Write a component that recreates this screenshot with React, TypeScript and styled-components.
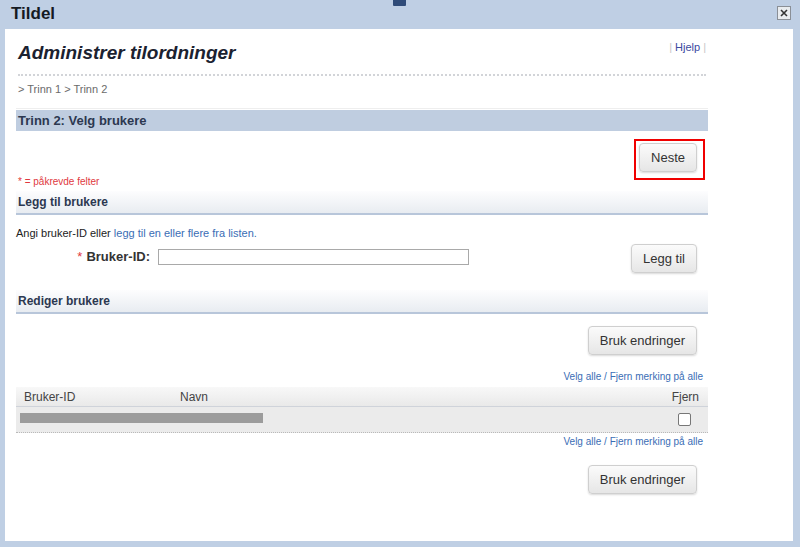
import React from "react";
import styled, { createGlobalStyle } from "styled-components";

const Global = createGlobalStyle`
  html, body { margin: 0; padding: 0; }
  body { font-family: "Liberation Sans", Arial, sans-serif; }
  * { box-sizing: border-box; }
`;

const Page = styled.div`
  width: 800px;
  height: 547px;
  background: #bfcfe4;
  display: flex;
  flex-direction: column;
  overflow: hidden;
`;

const TitleBar = styled.div`
  position: relative;
  height: 29px;
  flex: none;
  display: flex;
  align-items: center;
  justify-content: space-between;
  padding: 0 9px 2px 11px;
`;

const Title = styled.div`
  font-size: 17px;
  font-weight: bold;
  color: #151a22;
`;

const Grip = styled.div`
  position: absolute;
  left: 393px;
  top: 0;
  width: 13px;
  height: 6px;
  background: #2f4b78;
  border-radius: 0 0 1px 1px;
`;

const CloseBtn = styled.div`
  width: 14px;
  height: 14px;
  border: 1px solid #8a8f96;
  background: #e9ecef;
  display: flex;
  align-items: center;
  justify-content: center;
  margin-bottom: 2px;
`;

const Panel = styled.div`
  flex: 1;
  margin: 0 7px 6px 5px;
  background: #fff;
  padding: 0 0 0 11px;
`;

const Content = styled.div`
  width: 692px;
  display: flex;
  flex-direction: column;
`;

const HeaderRow = styled.div`
  height: 47px;
  margin: 0 2px;
  display: flex;
  justify-content: space-between;
  align-items: center;
  border-bottom: 2px dotted #d2d4d8;
`;

const PageTitle = styled.h1`
  margin: 2px 0 0;
  font-size: 19px;
  font-weight: bold;
  font-style: italic;
  color: #1b2230;
`;

const HelpLinks = styled.div`
  font-size: 11px;
  color: #c8c8c8;
  align-self: flex-start;
  margin-top: 12px;
  display: flex;
  gap: 3px;
`;

const Link = styled.a`
  color: ${(p: { $c?: string }) => p.$c || "#3a6db5"};
  text-decoration: none;
`;

const Breadcrumb = styled.div`
  height: 33px;
  padding: 6px 2px 0;
  font-size: 11px;
  line-height: 14px;
  color: #6b6b6b;
  border-bottom: 1px solid #eeeeee;
`;

const SectionBar = styled.div`
  margin-top: 1px;
  height: 21px;
  background: #bfcde0;
  padding-left: 2px;
  display: flex;
  align-items: center;
  font-size: 13px;
  font-weight: bold;
  color: #2c3850;
`;

const NextRow = styled.div`
  height: 60px;
  display: flex;
  justify-content: space-between;
  padding: 8px 3px 2px 2px;
`;

const Required = styled.div`
  align-self: flex-end;
  font-size: 10px;
  line-height: 14px;
  color: #e0393e;
`;

const Highlight = styled.div`
  align-self: flex-start;
  border: 2px solid #f00000;
  padding: 2px 6px 6px 3px;
  display: flex;
`;

const Button = styled.button`
  height: 29px;
  padding: 0 11px;
  font-family: "Liberation Sans", Arial, sans-serif;
  font-size: 13px;
  color: #333;
  background: linear-gradient(#fbfbfb, #e6e6e6);
  border: 1px solid #cfcfcf;
  border-radius: 4px;
  box-shadow: 0 1px 2px rgba(0, 0, 0, 0.15);
`;

const SubBar = styled.div`
  height: 24px;
  margin-top: ${(p: { $mt?: number }) => p.$mt ?? 0}px;
  background: linear-gradient(#fdfdfe, #e8ecf1);
  border-bottom: 2px solid #b8c6da;
  padding-left: 2px;
  display: flex;
  align-items: center;
  font-size: 12px;
  font-weight: bold;
  color: #2c3850;
`;

const Hint = styled.div`
  margin-top: 10px;
  height: 16px;
  font-size: 11px;
  line-height: 16px;
  color: #222;
`;

const FieldRow = styled.div`
  margin-top: 3px;
  height: 29px;
  display: flex;
  align-items: center;
  padding-right: 11px;
`;

const FieldLabel = styled.label`
  width: 142px;
  text-align: right;
  padding-right: 8px;
  font-size: 13px;
  font-weight: bold;
  color: #333;
  margin-top: -4px;
`;

const Star = styled.span`
  color: #e0393e;
  font-weight: normal;
  margin-right: 4px;
`;

const TextInput = styled.input`
  width: 311px;
  height: 16px;
  border: 1px solid #a9a9a9;
  margin: -4px 0 0;
  padding: 0 2px;
`;

const Spacer = styled.div`
  flex: 1;
`;

const ButtonRow = styled.div`
  display: flex;
  justify-content: flex-end;
  padding-right: 11px;
  margin-top: ${(p: { $mt: number }) => p.$mt}px;
`;

const SelectLinks = styled.div`
  display: flex;
  justify-content: flex-end;
  padding-right: 5px;
  margin-top: ${(p: { $mt: number }) => p.$mt}px;
  font-size: 10px;
  line-height: 14px;
  color: #3a6db5;
`;

const Table = styled.div`
  margin-top: 3px;
  display: flex;
  flex-direction: column;
`;

const HeadRow = styled.div`
  height: 20px;
  display: grid;
  grid-template-columns: 156px 1fr 60px;
  align-items: center;
  padding: 0 9px 0 8px;
  background: linear-gradient(#f8f8f8, #e9e9e9);
  border-bottom: 1px solid #cfd3da;
  font-size: 12px;
  color: #444;
`;

const HeadRight = styled.div`
  text-align: right;
`;

const BodyRow = styled.div`
  height: 26px;
  display: flex;
  align-items: center;
  justify-content: space-between;
  padding: 0 17px 0 4px;
  background: #ebebeb;
  border-bottom: 1px dotted #b9b9b9;
`;

const Redacted = styled.div`
  width: 243px;
  height: 10px;
  margin-top: -4px;
  background: #9c9c9c;
`;

const Check = styled.div`
  width: 13px;
  height: 13px;
  border: 1px solid #777;
  border-radius: 2px;
  background: #fff;
`;

export default function App() {
  return (
    <Page>
      <Global />
      <TitleBar>
        <Title>Tildel</Title>
        <Grip />
        <CloseBtn>
          <svg width="8" height="8" viewBox="0 0 8 8">
            <path d="M1 1L7 7M7 1L1 7" stroke="#333" strokeWidth="1.6" />
          </svg>
        </CloseBtn>
      </TitleBar>
      <Panel>
        <Content>
          <HeaderRow>
            <PageTitle>Administrer tilordninger</PageTitle>
            <HelpLinks>
              <span>|</span>
              <Link $c="#3b4aa0">Hjelp</Link>
              <span>|</span>
            </HelpLinks>
          </HeaderRow>
          <Breadcrumb>&gt; Trinn 1 &gt; Trinn 2</Breadcrumb>
          <SectionBar>Trinn 2: Velg brukere</SectionBar>
          <NextRow>
            <Required>* = påkrevde felter</Required>
            <Highlight>
              <Button>Neste</Button>
            </Highlight>
          </NextRow>
          <SubBar>Legg til brukere</SubBar>
          <Hint>
            Angi bruker-ID eller <Link>legg til en eller flere fra listen.</Link>
          </Hint>
          <FieldRow>
            <FieldLabel>
              <Star>*</Star>Bruker-ID:
            </FieldLabel>
            <TextInput />
            <Spacer />
            <Button>Legg til</Button>
          </FieldRow>
          <SubBar $mt={17}>Rediger brukere</SubBar>
          <ButtonRow $mt={12}>
            <Button>Bruk endringer</Button>
          </ButtonRow>
          <SelectLinks $mt={15}>
            <Link>Velg alle</Link>&nbsp;/&nbsp;<Link>Fjern merking på alle</Link>
          </SelectLinks>
          <Table>
            <HeadRow>
              <div>Bruker-ID</div>
              <div>Navn</div>
              <HeadRight>Fjern</HeadRight>
            </HeadRow>
            <BodyRow>
              <Redacted />
              <Check />
            </BodyRow>
          </Table>
          <SelectLinks $mt={2}>
            <Link>Velg alle</Link>&nbsp;/&nbsp;<Link>Fjern merking på alle</Link>
          </SelectLinks>
          <ButtonRow $mt={16}>
            <Button>Bruk endringer</Button>
          </ButtonRow>
        </Content>
      </Panel>
    </Page>
  );
}
